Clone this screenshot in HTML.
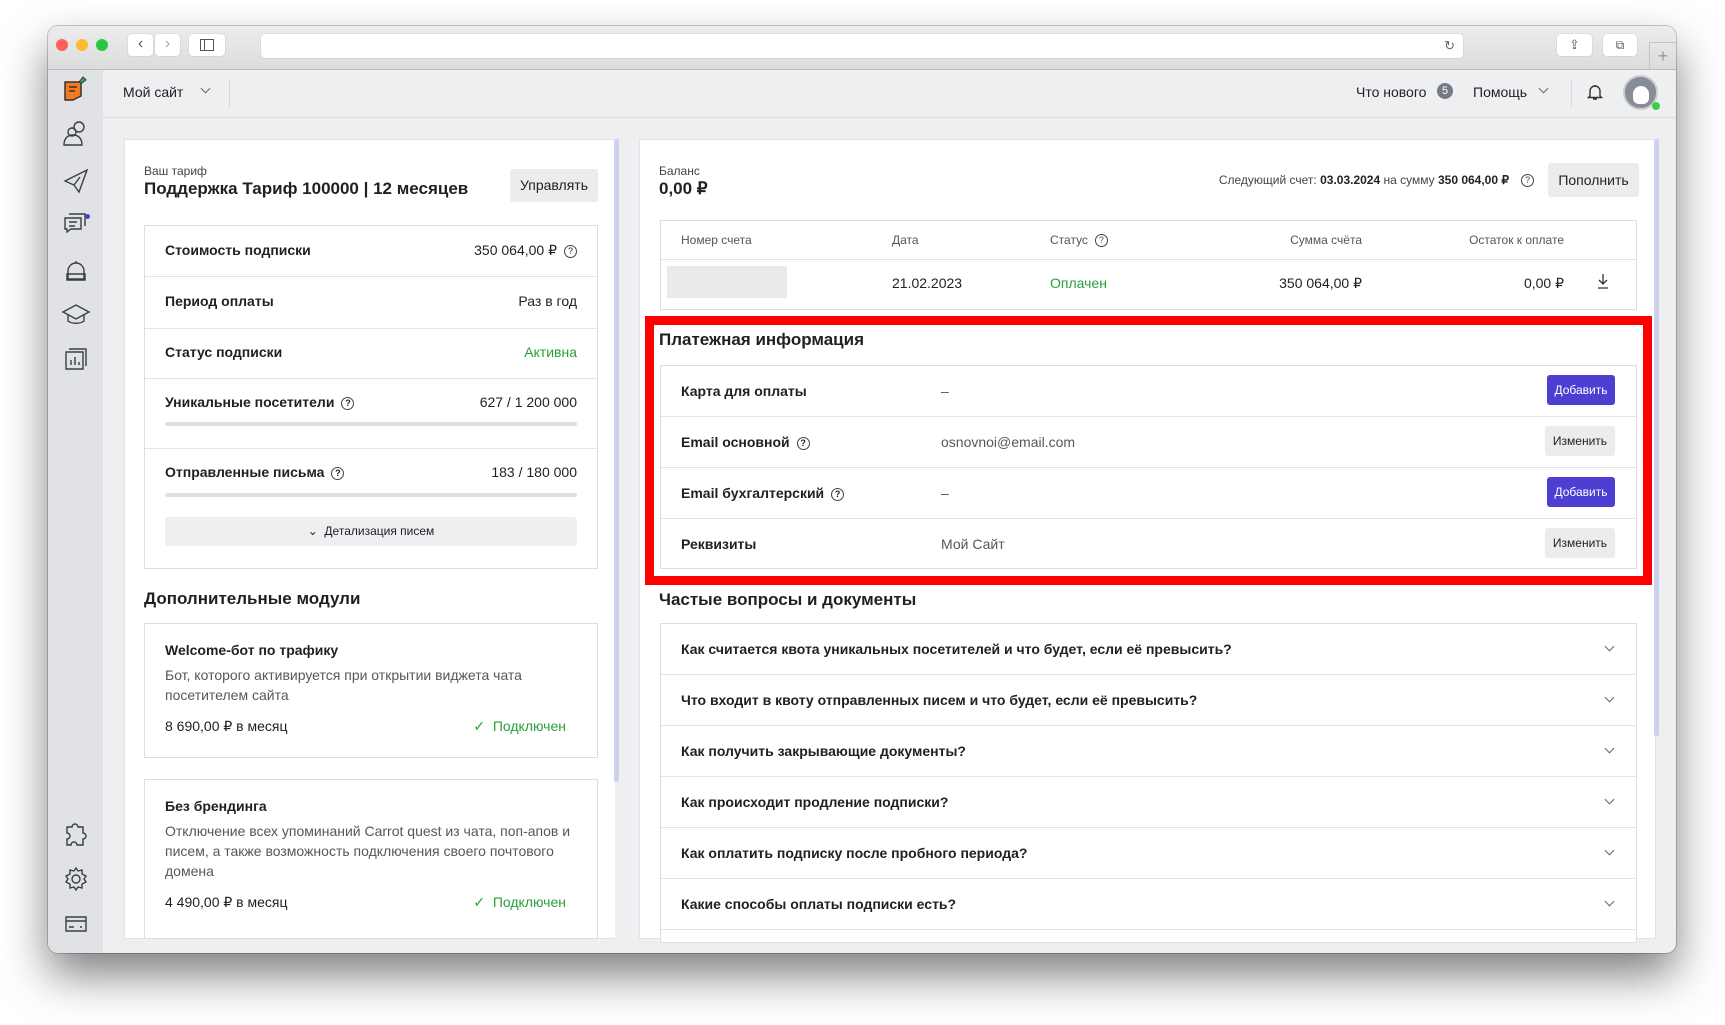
<!DOCTYPE html>
<html><head><meta charset="utf-8"><style>
*{box-sizing:border-box;margin:0;padding:0}
body{width:1725px;height:1025px;background:#fff;font-family:"Liberation Sans",sans-serif;color:#1f1f24;position:relative;overflow:hidden}
.a{position:absolute}
.win{left:48px;top:26px;width:1628px;height:927px;border-radius:10px;overflow:hidden;background:#eeeff1;box-shadow:0 22px 45px rgba(0,0,0,.5),0 0 0 1px rgba(0,0,0,.2)}
.tb{left:0;top:0;width:1628px;height:44px;background:linear-gradient(#ececec,#dcdcdc);border-bottom:1px solid #bdbdbd}
.dot{width:12px;height:12px;border-radius:50%;top:13px}
.tbtn{background:#fff;border-radius:4px;height:22px;top:8px;box-shadow:0 0 1px rgba(0,0,0,.3)}
.side{left:0;top:44px;width:55px;height:883px;background:#e0e2e6}
.hdr{left:55px;top:44px;width:1573px;height:48px;border-bottom:1px solid #dcdde0;background:#eeeff1}
.t14{font-size:14px}
.card{background:#fff;border:1px solid #e2e3e6}
.b{font-weight:bold}
.row{border-top:1px solid #e3e4e7}
.gray{color:#55575e}
.btng{background:#ececee;border-radius:3px;font-size:12px;color:#222;text-align:center}
.btnb{background:#4d3fd1;border-radius:3px;font-size:12px;color:#fff;text-align:center}
.q{display:inline-block;width:13px;height:13px;border:1.3px solid #444;border-radius:50%;font-size:9px;line-height:11px;text-align:center;vertical-align:1px;margin-left:7px}
.green{color:#27a03a}
.chev{width:7px;height:7px;border-right:1.4px solid #666;border-bottom:1.4px solid #666;transform:rotate(45deg)}
</style></head><body>
<div class="a win">
 <div class="a tb">
  <div class="a dot" style="left:8px;background:#fe5f57"></div>
  <div class="a dot" style="left:28px;background:#febc2e"></div>
  <div class="a dot" style="left:48px;background:#28c840"></div>
  <div class="a tbtn" style="left:80px;width:25px;font-size:16px;text-align:center;line-height:20px;color:#555">‹</div>
  <div class="a tbtn" style="left:107px;width:25px;font-size:16px;text-align:center;line-height:20px;color:#aaa">›</div>
  <div class="a tbtn" style="left:141px;width:36px"><div class="a" style="left:11px;top:5px;width:14px;height:12px;border:1.3px solid #555"></div><div class="a" style="left:15px;top:5px;width:1px;height:12px;background:#555"></div></div>
  <div class="a tbtn" style="left:213px;width:1202px;height:24px;top:8px"><div class="a" style="right:8px;top:4px;font-size:13px;color:#666">↻</div></div>
  <div class="a tbtn" style="left:1509px;width:35px;text-align:center;font-size:13px;line-height:22px;color:#555">⇪</div>
  <div class="a tbtn" style="left:1555px;width:34px;text-align:center;font-size:12px;line-height:22px;color:#555">⧉</div>
  <div class="a" style="left:1601px;top:16px;width:27px;height:28px;border-left:1px solid #c4c4c4;border-top:1px solid #c4c4c4;color:#999;font-size:18px;text-align:center;line-height:26px">+</div>
 </div>
 <div class="a side">
  <svg class="a" style="left:13px;top:4px" width="30" height="32" viewBox="0 0 30 32"><path d="M4 8h16v14l-8 4H4z" fill="#f47a20" stroke="#333" stroke-width="1.5" stroke-linejoin="round"/><path d="M8 13h8M8 17h6" stroke="#333" stroke-width="1.5"/><path d="M18 8l4-5 3 3-4 3z" fill="#3bae4a" stroke="#333" stroke-width="1"/></svg>
  <svg class="a" style="left:10px;top:0" width="36" height="880" viewBox="0 0 36 880" fill="none" stroke="#3a3d45" stroke-width="1.4">
   <g transform="translate(0,46)"><circle cx="21" cy="11" r="5"/><circle cx="14" cy="16" r="4"/><path d="M6 29c0-7 4-10 9-10s9 3 9 10z"/></g>
   <g transform="translate(0,91)"><path d="M7 20l22-11-8 22-5-7z M16 24l6-8"/></g>
   <g transform="translate(0,136)"><path d="M7 12h16v11H13l-4 3v-3H7z M11 16h8 M11 20h6 M11 8h16v12"/></g>
   <g transform="translate(0,182)"><path d="M10 27v-8a8 8 0 0 1 16 0v8z M9 22h18v6H9z M18 9v2"/></g>
   <g transform="translate(0,227)"><path d="M5 15l13-7 13 7-13 7z M10 18v6c4 3 12 3 16 0v-6"/></g>
   <g transform="translate(0,271)"><path d="M8 11h17v17H8z M13 24v-5 M17 24v-8 M21 24v-3 M11 8h17v17"/></g>
   <g transform="translate(0,746)"><path d="M9 11h5a3 3 0 0 1 6 0h5v6a3 3 0 0 1 0 6v6h-6a3 3 0 0 0-6 0H9v-6a3 3 0 0 0 0-6z"/></g>
   <g transform="translate(0,791)"><circle cx="18" cy="18" r="4"/><path d="M18 7l2 3 4-1 0 4 4 2-2 3 2 3-4 2 0 4-4-1-2 3-2-3-4 1 0-4-4-2 2-3-2-3 4-2 0-4 4 1z"/></g>
   <g transform="translate(0,836)"><path d="M8 11h20v14H8z M8 15h20 M11 21h5 M22 21h2"/></g>
  </svg>
  <div class="a" style="left:37px;top:144px;width:5px;height:5px;border-radius:50%;background:#4d3fd1"></div>
 </div>
 <div class="a hdr t14">
  <div class="a" style="left:20px;top:14px">Мой сайт</div><div class="a chev" style="left:99px;top:15px"></div>
  <div class="a" style="left:126px;top:10px;width:1px;height:28px;background:#d8d9dc"></div>
  <div class="a" style="left:1253px;top:14px">Что нового</div>
  <div class="a" style="left:1334px;top:13px;width:16px;height:16px;border-radius:50%;background:#777a85;color:#fff;font-size:11px;text-align:center;line-height:16px">5</div>
  <div class="a" style="left:1370px;top:14px">Помощь</div><div class="a chev" style="left:1437px;top:15px"></div>
  <div class="a" style="left:1468px;top:10px;width:1px;height:28px;background:#d8d9dc"></div>
  <svg class="a" style="left:1484px;top:13px" width="16" height="18" viewBox="0 0 16 18" fill="none" stroke="#333" stroke-width="1.4"><path d="M3 13V8a5 5 0 0 1 10 0v5l1.5 1.5h-13z M6 16h4 M8 2v1"/></svg>
  <div class="a" style="left:1520px;top:5px;width:35px;height:35px;border-radius:50%;background:#888c98;border:2px solid #ccc"><div class="a" style="left:8px;top:9px;width:16px;height:18px;border-radius:8px 8px 6px 6px;background:#fff"></div></div>
  <div class="a" style="left:1549px;top:32px;width:8px;height:8px;border-radius:50%;background:#3ccf4e"></div>
 </div>

 <!-- left card -->
 <div class="a card" style="left:76px;top:113px;width:491px;height:800px;border-right:none">
  <div class="a" style="left:19px;top:24px;font-size:12px;color:#444">Ваш тариф</div>
  <div class="a b" style="left:19px;top:39px;font-size:17px">Поддержка Тариф 100000 | 12 месяцев</div>
  <div class="a btng" style="left:385px;top:29px;width:88px;height:33px;line-height:33px;font-size:14px">Управлять</div>
  <div class="a card t14" style="left:19px;top:85px;width:454px;height:344px;border-color:#dcdde0">
   <div class="a b" style="left:20px;top:16px">Стоимость подписки</div><div class="a" style="right:20px;top:16px">350 064,00 ₽<span class="q">?</span></div>
   <div class="a row" style="left:0;top:50px;width:452px"></div>
   <div class="a b" style="left:20px;top:67px">Период оплаты</div><div class="a" style="right:20px;top:67px">Раз в год</div>
   <div class="a row" style="left:0;top:102px;width:452px"></div>
   <div class="a b" style="left:20px;top:118px">Статус подписки</div><div class="a green" style="right:20px;top:118px">Активна</div>
   <div class="a row" style="left:0;top:152px;width:452px"></div>
   <div class="a b" style="left:20px;top:168px">Уникальные посетители<span class="q">?</span></div><div class="a" style="right:20px;top:168px">627 / 1 200 000</div>
   <div class="a" style="left:20px;top:196px;width:412px;height:4px;border-radius:2px;background:#dfe0e3"></div>
   <div class="a row" style="left:0;top:222px;width:452px"></div>
   <div class="a b" style="left:20px;top:238px">Отправленные письма<span class="q">?</span></div><div class="a" style="right:20px;top:238px">183 / 180 000</div>
   <div class="a" style="left:20px;top:267px;width:412px;height:4px;border-radius:2px;background:#dfe0e3"></div>
   <div class="a" style="left:20px;top:291px;width:412px;height:29px;background:#eeeff1;border-radius:3px;font-size:12px;text-align:center;line-height:29px">⌄&nbsp; Детализация писем</div>
  </div>
  <div class="a b" style="left:19px;top:449px;font-size:17px">Дополнительные модули</div>
  <div class="a card t14" style="left:19px;top:483px;width:454px;height:135px;border-color:#dcdde0">
   <div class="a b" style="left:20px;top:18px">Welcome-бот по трафику</div>
   <div class="a gray" style="left:20px;top:41px;width:400px;line-height:20px">Бот, которого активируется при открытии виджета чата посетителем сайта</div>
   <div class="a" style="left:20px;top:94px">8 690,00 ₽ в месяц</div>
   <div class="a green" style="right:31px;top:94px">✓&nbsp;&nbsp;Подключен</div>
  </div>
  <div class="a card t14" style="left:19px;top:639px;width:454px;height:160px;border-color:#dcdde0">
   <div class="a b" style="left:20px;top:18px">Без брендинга</div>
   <div class="a gray" style="left:20px;top:41px;width:420px;line-height:20px">Отключение всех упоминаний Carrot quest из чата, поп-апов и писем, а также возможность подключения своего почтового домена</div>
   <div class="a" style="left:20px;top:114px">4 490,00 ₽ в месяц</div>
   <div class="a green" style="right:31px;top:114px">✓&nbsp;&nbsp;Подключен</div>
  </div>
 </div>
 <div class="a" style="left:566px;top:113px;width:5px;height:643px;background:#cfd0ee;border-radius:2px"></div>

 <!-- right card -->
 <div class="a card" style="left:591px;top:113px;width:1017px;height:800px">
  <div class="a" style="left:19px;top:24px;font-size:12px;color:#444">Баланс</div>
  <div class="a b" style="left:19px;top:39px;font-size:17px">0,00 ₽</div>
  <div class="a" style="right:121px;top:33px;font-size:12px;color:#444">Следующий счет: <b style="color:#222">03.03.2024</b> на сумму <b style="color:#222">350 064,00 ₽</b><span class="q" style="margin-left:12px">?</span></div>
  <div class="a btng" style="left:908px;top:23px;width:91px;height:34px;line-height:34px;font-size:14px">Пополнить</div>
  <div class="a card" style="left:20px;top:80px;width:977px;height:90px;border-color:#dcdde0;font-size:12px;color:#555">
   <div class="a" style="left:20px;top:12px">Номер счета</div>
   <div class="a" style="left:231px;top:12px">Дата</div>
   <div class="a" style="left:389px;top:12px">Статус<span class="q">?</span></div>
   <div class="a" style="right:274px;top:12px">Сумма счёта</div>
   <div class="a" style="right:72px;top:12px">Остаток к оплате</div>
   <div class="a row" style="left:0;top:38px;width:975px"></div>
   <div class="a" style="left:6px;top:45px;width:120px;height:32px;background:#e9eaec"></div>
   <div class="a t14" style="left:231px;top:54px;color:#222">21.02.2023</div>
   <div class="a t14 green" style="left:389px;top:54px">Оплачен</div>
   <div class="a t14" style="right:274px;top:54px;color:#222">350 064,00 ₽</div>
   <div class="a t14" style="right:72px;top:54px;color:#222">0,00 ₽</div>
   <svg class="a" style="left:935px;top:52px" width="14" height="16" viewBox="0 0 14 16" fill="none" stroke="#333" stroke-width="1.3"><path d="M7 1v10 M3 7l4 4 4-4 M2 15h10"/></svg>
  </div>
  <div class="a" style="left:5px;top:176px;width:1007px;height:269px;border:9px solid #ff0000"></div>
  <div class="a b" style="left:19px;top:190px;font-size:17px">Платежная информация</div>
  <div class="a card t14" style="left:20px;top:225px;width:977px;height:204px;border-color:#dcdde0">
   <div class="a b" style="left:20px;top:17px">Карта для оплаты</div><div class="a gray" style="left:280px;top:17px">–</div>
   <div class="a btnb" style="left:886px;top:9px;width:68px;height:30px;line-height:30px">Добавить</div>
   <div class="a row" style="left:0;top:50px;width:975px"></div>
   <div class="a b" style="left:20px;top:68px">Email основной<span class="q">?</span></div><div class="a gray" style="left:280px;top:68px">osnovnoi@email.com</div>
   <div class="a btng" style="left:884px;top:60px;width:70px;height:30px;line-height:30px">Изменить</div>
   <div class="a row" style="left:0;top:101px;width:975px"></div>
   <div class="a b" style="left:20px;top:119px">Email бухгалтерский<span class="q">?</span></div><div class="a gray" style="left:280px;top:119px">–</div>
   <div class="a btnb" style="left:886px;top:111px;width:68px;height:30px;line-height:30px">Добавить</div>
   <div class="a row" style="left:0;top:152px;width:975px"></div>
   <div class="a b" style="left:20px;top:170px">Реквизиты</div><div class="a gray" style="left:280px;top:170px">Мой Сайт</div>
   <div class="a btng" style="left:884px;top:162px;width:70px;height:30px;line-height:30px">Изменить</div>
  </div>
  <div class="a b" style="left:19px;top:450px;font-size:17px">Частые вопросы и документы</div>
  <div class="a card t14 b" style="left:20px;top:483px;width:977px;height:320px;border-color:#dcdde0">
   <div class="a" style="left:20px;top:17px">Как считается квота уникальных посетителей и что будет, если её превысить?</div>
   <div class="a" style="left:20px;top:68px">Что входит в квоту отправленных писем и что будет, если её превысить?</div>
   <div class="a" style="left:20px;top:119px">Как получить закрывающие документы?</div>
   <div class="a" style="left:20px;top:170px">Как происходит продление подписки?</div>
   <div class="a" style="left:20px;top:221px">Как оплатить подписку после пробного периода?</div>
   <div class="a" style="left:20px;top:272px">Какие способы оплаты подписки есть?</div>
   <div class="a row" style="left:0;top:50px;width:975px"></div>
   <div class="a row" style="left:0;top:101px;width:975px"></div>
   <div class="a row" style="left:0;top:152px;width:975px"></div>
   <div class="a row" style="left:0;top:203px;width:975px"></div>
   <div class="a row" style="left:0;top:254px;width:975px"></div>
   <div class="a row" style="left:0;top:305px;width:975px"></div>
   <div class="a chev" style="left:945px;top:19px"></div>
   <div class="a chev" style="left:945px;top:70px"></div>
   <div class="a chev" style="left:945px;top:121px"></div>
   <div class="a chev" style="left:945px;top:172px"></div>
   <div class="a chev" style="left:945px;top:223px"></div>
   <div class="a chev" style="left:945px;top:274px"></div>
  </div>
 </div>
 <div class="a" style="left:1606px;top:113px;width:5px;height:597px;background:#cfd0ee;border-radius:2px"></div>
</div>
</body></html>
